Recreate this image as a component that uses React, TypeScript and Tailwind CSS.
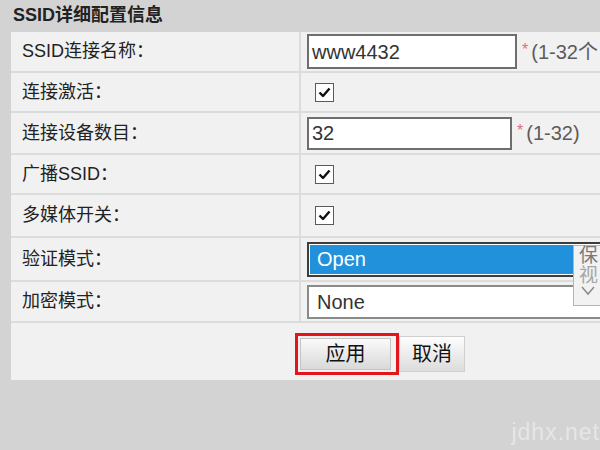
import React from 'react';

const font = { fontFamily: '"Liberation Sans", "Noto Sans CJK SC", sans-serif' };

const Check: React.FC = () => (
  <div className="w-[19px] h-[19px] border-[1.5px] border-[#5a5a5a] bg-white flex items-center justify-center">
    <svg width="13" height="11" viewBox="0 0 13 11">
      <path d="M1.5 5.5 L5 9 L11.5 1.5" fill="none" stroke="#111" strokeWidth="2.4" strokeLinejoin="round" />
    </svg>
  </div>
);

const Hint: React.FC<{ text: string }> = ({ text }) => (
  <div className="flex items-center ml-[5px] whitespace-nowrap">
    <span className="text-[#e06b86] text-[16px] mr-[3px] -mt-[4px]">*</span>
    <span className="text-[#5c5c5c] text-[20px]">{text}</span>
  </div>
);

const Row: React.FC<{ label: string; h: string; children?: React.ReactNode; pad?: string }> = ({ label, h, children, pad }) => (
  <div className={`flex gap-[2px] ${h}`}>
    <div className="w-[288px] shrink-0 bg-[#f1f1f1] flex items-center pl-[11px] text-[18px] text-[#222]">{label}</div>
    <div className={`flex-1 bg-[#f1f1f1] flex items-center ${pad ?? 'pl-[6px]'}`}>{children}</div>
  </div>
);

const App: React.FC = () => {
  return (
    <div className="relative w-[600px] h-[450px] overflow-hidden bg-[#d3d3d3]" style={font}>
      <div className="h-[32px] pl-[13px] pt-[3px] text-[18px] font-bold text-[#222] leading-[24px]">SSID详细配置信息</div>

      <div className="ml-[11px] w-[640px] flex flex-col gap-[2px] bg-[#dcdcdc]">
        <Row label="SSID连接名称：" h="h-[39px]">
          <div className="w-[210px] h-[35px] border-2 border-[#6e6e6e] bg-white flex items-center pl-[3px] text-[20px] text-[#333]">www4432</div>
          <Hint text="(1-32个" />
        </Row>
        <Row label="连接激活：" h="h-[38px]" pad="pl-[14px]">
          <Check />
        </Row>
        <Row label="连接设备数目：" h="h-[40px]">
          <div className="w-[205px] h-[33px] border-2 border-[#6e6e6e] bg-white flex items-center pl-[3px] text-[20px] text-[#333]">32</div>
          <Hint text="(1-32)" />
        </Row>
        <Row label="广播SSID：" h="h-[38px]" pad="pl-[14px]">
          <Check />
        </Row>
        <Row label="多媒体开关：" h="h-[41px]" pad="pl-[14px]">
          <Check />
        </Row>
        <Row label="验证模式：" h="h-[42px]">
          <div className="w-[300px] h-[35px] border-2 border-[#3c3c3c] bg-white p-[1px]">
            <div className="h-full bg-[#2191dc] flex items-center pl-[7px] text-[20px] text-white">Open</div>
          </div>
        </Row>
        <Row label="加密模式：" h="h-[39px]">
          <div className="w-[300px] h-[34px] border-2 border-[#8a8a8a] bg-white flex items-center pl-[8px] text-[20px] text-[#333]">None</div>
        </Row>
        <div className="flex gap-[2px] h-[57px]">
          <div className="w-[288px] shrink-0 bg-[#f1f1f1]" />
          <div className="flex-1 bg-[#f1f1f1] flex items-start pt-[10px] -ml-[6px]">
            <div className="border-[3px] border-[#e3141c] p-[2px] pr-[5px] w-[104px] h-[42px]">
              <button className="w-full h-full bg-gradient-to-b from-[#fafafa] to-[#d9d9d9] border border-[#c4c4c4] text-[20px] text-[#111] leading-none">应用</button>
            </div>
            <button className="mt-[3px] w-[66px] h-[36px] bg-gradient-to-b from-[#fdfdfd] to-[#dcdcdc] border border-[#cfcfcf] text-[20px] text-[#111] leading-none">取消</button>
          </div>
        </div>
      </div>

      <div className="absolute left-[573px] top-[245px] w-[40px] h-[61px] bg-[#f2f2f2] border border-[#b5b5b5] flex flex-col items-start pl-[5px] text-[19px] leading-[20px]">
        <span className="text-[#7a7a7a]">保</span>
        <span className="text-[#a5a5a5]">视</span>
        <svg width="16" height="10" viewBox="0 0 16 10" className="ml-[1px]">
          <path d="M2 1 L8 8 L14 1" fill="none" stroke="#8a8a8a" strokeWidth="1.5" />
        </svg>
      </div>

      <div className="absolute right-0 bottom-[1px] text-[23px] text-white/45 tracking-[1px]">jdhx.net</div>
    </div>
  );
};

export default App;
